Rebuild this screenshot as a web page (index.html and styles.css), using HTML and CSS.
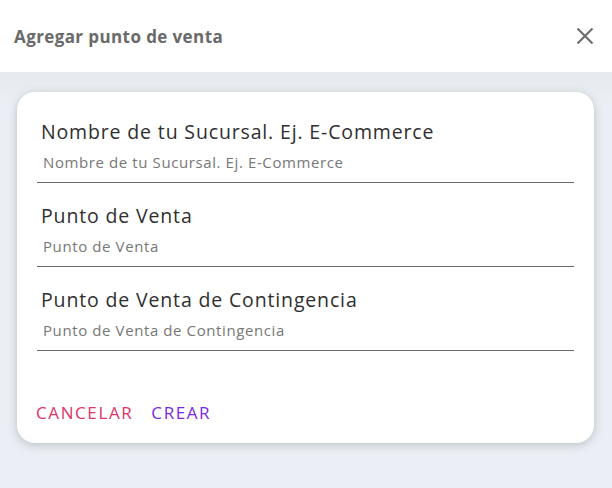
FILE: index.html
```html
<!DOCTYPE html>
<html lang="es">
<head>
<meta charset="utf-8">
<link rel="stylesheet" href="styles.css">
</head>
<body>
<div class="dialog">
  <header class="head">
    <h1 class="title">Agregar punto de venta</h1>
    <button class="close" aria-label="Cerrar">
      <svg width="18" height="18" viewBox="0 0 18 18"><path d="M1.5 1.5L16.5 16.5M16.5 1.5L1.5 16.5" stroke="#6f6f6f" stroke-width="2.2" fill="none"/></svg>
    </button>
  </header>
  <main class="body">
    <form class="card">
      <div class="field">
        <label class="label">Nombre de tu Sucursal. Ej. E-Commerce</label>
        <input class="input" placeholder="Nombre de tu Sucursal. Ej. E-Commerce">
      </div>
      <div class="field">
        <label class="label">Punto de Venta</label>
        <input class="input" placeholder="Punto de Venta">
      </div>
      <div class="field">
        <label class="label">Punto de Venta de Contingencia</label>
        <input class="input" placeholder="Punto de Venta de Contingencia">
      </div>
      <div class="actions">
        <button type="button" class="btn cancel">CANCELAR</button>
        <button type="button" class="btn create">CREAR</button>
      </div>
    </form>
  </main>
</div>
</body>
</html>
```
FILE: styles.css
```css
* { box-sizing: border-box; }
html, body { margin: 0; padding: 0; }
body {
  width: 612px;
  height: 488px;
  overflow: hidden;
  font-family: "Open Sans", "Noto Sans", sans-serif;
  background: #ebeff5;
}
.dialog { display: flex; flex-direction: column; height: 488px; }
.head {
  height: 72px;
  background: #ffffff;
  display: flex;
  align-items: center;
  justify-content: space-between;
  padding: 0 18px 0 14px;
}
.title {
  margin: 0;
  font-size: 17px;
  font-weight: 700;
  color: #6a6a6a;
  letter-spacing: 0.4px;
}
.close {
  border: 0;
  background: none;
  padding: 0;
  width: 18px;
  height: 18px;
  display: flex;
}
.body {
  flex: 1;
  padding: 20px 18px 0 17px;
  background: linear-gradient(#e6eaee, #ebeff5 30px);
}
.card {
  background: #ffffff;
  border-radius: 18px;
  height: 351px;
  box-shadow: 0 2px 10px rgba(120, 135, 140, 0.45);
  padding: 28px 20px 0 20px;
  display: flex;
  flex-direction: column;
}
.field {
  display: flex;
  flex-direction: column;
  height: 84px;
}
.label {
  font-size: 19.5px;
  color: #2f2f2f;
  padding-left: 4px;
  line-height: 24px;
  letter-spacing: 0.85px;
}
.input {
  border: 0;
  border-bottom: 1px solid #6b6b6b;
  outline: none;
  font-family: inherit;
  font-size: 15px;
  padding: 8px 0 10px 6px;
  color: #333;
  background: transparent;
  line-height: 20px;
  letter-spacing: 0.6px;
}
.input::placeholder { color: #777777; }
.actions {
  margin-top: 31px;
  display: flex;
  gap: 18px;
  padding-left: 0;
  margin-left: -1px;
}
.btn {
  border: 0;
  background: none;
  padding: 0;
  font-family: inherit;
  font-size: 17px;
  letter-spacing: 1.6px;
  line-height: 20px;
}
.cancel { color: #dc3566; }
.create { color: #7a2ae0; }
```
